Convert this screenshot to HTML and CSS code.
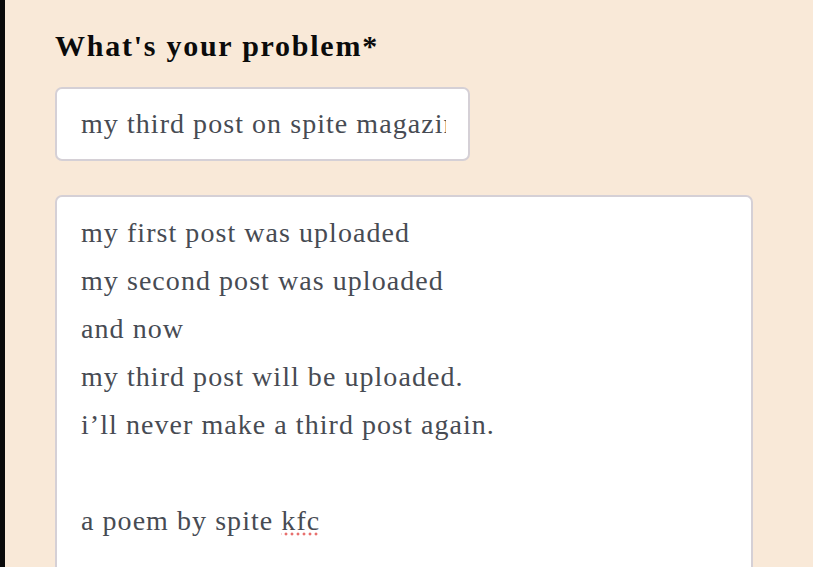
FILE: index.html
```html
<!DOCTYPE html>
<html>
<head>
<meta charset="utf-8">
<link rel="stylesheet" href="styles.css">
</head>
<body>
<div class="page">
  <div class="edge"></div>
  <main class="content">
    <h2 class="label">What's your problem*</h2>
    <div class="field title-field"><span class="field-text">my third post on spite magazine</span></div>
    <div class="field body-field">
      <div class="line">my first post was uploaded</div>
      <div class="line">my second post was uploaded</div>
      <div class="line">and now</div>
      <div class="line">my third post will be uploaded.</div>
      <div class="line">i’ll never make a third post again.</div>
      <div class="line blank">&nbsp;</div>
      <div class="line">a poem by spite <span class="misspelled">kfc</span></div>
    </div>
  </main>
</div>
</body>
</html>
```

FILE: styles.css
```css
html, body {
  margin: 0;
  padding: 0;
  height: 100%;
  overflow: hidden;
  background: #f9e9d8;
}

.page {
  display: flex;
  min-height: 100%;
}

.edge {
  width: 5px;
  flex: 0 0 5px;
  background: #0a0a0a;
}

.content {
  flex: 1;
  padding: 28px 0 0 50px;
  display: flex;
  flex-direction: column;
  align-items: flex-start;
}

.label {
  margin: 0;
  font-family: "Liberation Serif", "Times New Roman", serif;
  font-weight: bold;
  font-size: 30px;
  line-height: 36px;
  letter-spacing: 1.75px;
  color: #0b0b0b;
}

.field {
  box-sizing: border-box;
  background: #ffffff;
  border: 2px solid #d5d0d6;
  border-radius: 7px;
  font-family: "Liberation Serif", "Times New Roman", serif;
  font-size: 28px;
  letter-spacing: 1.05px;
  color: #474b53;
}

.title-field {
  margin-top: 23px;
  width: 415px;
  height: 74px;
  line-height: 70px;
  padding: 0 22px 0 24px;
  overflow: hidden;
  white-space: nowrap;
}

.field-text {
  display: block;
  overflow: hidden;
}

.body-field {
  margin-top: 34px;
  width: 698px;
  min-height: 420px;
  padding: 12px 24px;
  line-height: 48px;
}

.line {
  white-space: nowrap;
}

.misspelled {
  background-image: radial-gradient(circle, #e8706e 1.3px, transparent 1.7px);
  background-size: 6px 4px;
  background-repeat: repeat-x;
  background-position: 2px 100%;
}
```
